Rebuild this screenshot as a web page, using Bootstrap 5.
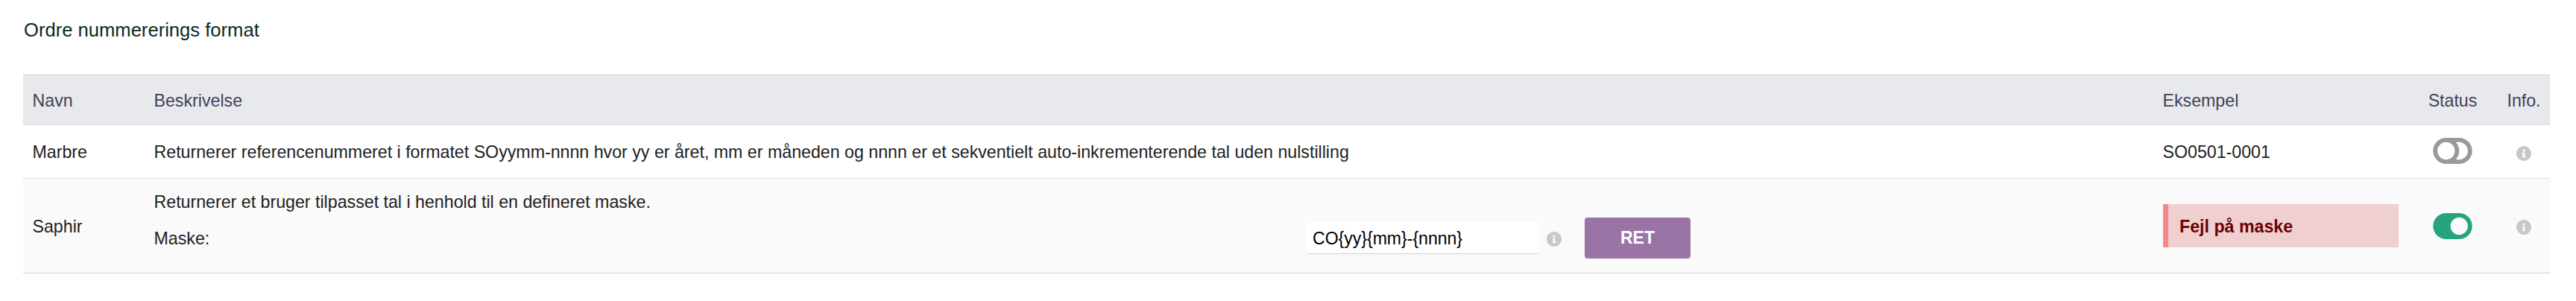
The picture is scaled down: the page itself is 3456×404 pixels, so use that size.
<!DOCTYPE html>
<html lang="da">
<head>
<meta charset="utf-8">
<meta name="viewport" content="width=device-width, initial-scale=1">
<title>Ordre nummererings format</title>
<link href="https://cdn.jsdelivr.net/npm/bootstrap@5.3.0/dist/css/bootstrap.min.css" rel="stylesheet">
<style>
body{font-family:"Liberation Sans",Arial,sans-serif;font-size:23.2px;line-height:34px;color:#212121;background:#fff;overflow:hidden}
.page-wrap{padding:23px 35px 0 31px}
.page-title{font-size:25.6px;line-height:34px;color:#0c2a20;margin:0 0 43px;padding-left:1px;font-weight:400}
.format-table{table-layout:fixed;width:3390px;border-collapse:separate;border-spacing:0;margin:0;--bs-table-color:#212121;--bs-table-bg:transparent}
.format-table>:not(caption)>*>*{padding:0 12px 0 12.5px;border:0;border-bottom:1px solid #dcdcde;vertical-align:middle;background:transparent;box-shadow:none;color:#212121}
.format-table>thead>tr>th{height:68px;padding-top:2px;background:#e8e9ed;border-top:1px solid #d3d3d5;color:#424158;font-weight:400}
.format-table>tbody>tr.row-plain>td{height:72px}
.format-table>tbody>tr.row-mask>td{height:127px;background:#fafafa;border-bottom-color:#d3d3d5}
.format-table>tbody>tr.row-mask>td.cell-name{padding-top:2px}
.format-table>tbody>tr.row-mask>td.cell-desc{padding-bottom:5px}
.col-name{width:163px}.col-example{width:341px}.col-status{width:121px}.col-info{width:70px}
.format-table>:not(caption)>*>.tight{padding-left:0;padding-right:0}
.format-table>tbody>tr.row-plain>td.cell-toggle{padding-bottom:2px}
.mask-row{height:55px}
.mask-label{width:1546.5px}
.mask-input{width:313px;height:43px;padding:2px 7px 0 8px;border:0;border-bottom:1px solid #d0d0d0;border-radius:4px;font-size:23.04px;color:#000;background:#fff}
.mask-info{margin:3px 31px 0 9px}
.btn-edit{width:142px;height:55px;padding:0;border:0;border-radius:4px;background:#9b74a6;color:#fff;font-size:23.04px;font-weight:700}
.mask-error{width:316px;height:58px;margin:0 0 0 .5px;padding:2px 14px 0 15px;border:0;border-left:7px solid #f28a89;border-radius:0;background:#f0cfd0;color:#6b0000;font-weight:700}
.toggle-icon{width:53px;height:35px;display:block;margin:0 auto}
.info-icon{width:20px;height:20px;display:block;fill:#c8c8c8}
</style>
<script src="https://cdn.jsdelivr.net/npm/bootstrap@5.3.0/dist/js/bootstrap.bundle.min.js"></script>
</head>
<body>
<svg class="d-none" aria-hidden="true">
<symbol id="i-info" viewBox="8 8 496 496"><path d="M256 8C119.043 8 8 119.083 8 256c0 136.997 111.043 248 248 248s248-111.003 248-248C504 119.083 392.957 8 256 8zm0 110c23.196 0 42 18.804 42 42s-18.804 42-42 42-42-18.804-42-42 18.804-42 42-42zm56 254c0 6.627-5.373 12-12 12h-88c-6.627 0-12-5.373-12-12v-24c0-6.627 5.373-12 12-12h12v-64h-12c-6.627 0-12-5.373-12-12v-24c0-6.627 5.373-12 12-12h64c6.627 0 12 5.373 12 12v100h12c6.627 0 12 5.373 12 12v24z"/></symbol>
<symbol id="i-off" viewBox="0 64 576 384"><path d="M384 64H192C85.961 64 0 149.961 0 256s85.961 192 192 192h192c106.039 0 192-85.961 192-192S490.039 64 384 64zM64 256c0-70.741 57.249-128 128-128 70.741 0 128 57.249 128 128 0 70.741-57.249 128-128 128-70.741 0-128-57.249-128-128zm320 128h-48.905c65.217-72.858 65.236-183.12 0-256H384c70.741 0 128 57.249 128 128 0 70.74-57.249 128-128 128z"/></symbol>
<symbol id="i-on" viewBox="0 64 576 384"><path d="M384 64H192C86 64 0 150 0 256s86 192 192 192h192c106 0 192-86 192-192S490 64 384 64zm0 320c-70.8 0-128-57.3-128-128 0-70.8 57.3-128 128-128 70.8 0 128 57.3 128 128 0 70.8-57.3 128-128 128z"/></symbol>
</svg>
<main class="page-wrap">
  <h1 class="page-title">Ordre nummererings format</h1>
  <table class="table format-table">
    <colgroup><col class="col-name"><col><col class="col-example"><col class="col-status"><col class="col-info"></colgroup>
    <thead>
      <tr><th>Navn</th><th>Beskrivelse</th><th>Eksempel</th><th class="text-center tight">Status</th><th class="text-center tight">Info.</th></tr>
    </thead>
    <tbody>
      <tr class="row-plain">
        <td>Marbre</td>
        <td>Returnerer referencenummeret i formatet SOyymm-nnnn hvor yy er året, mm er måneden og nnnn er et sekventielt auto-inkrementerende tal uden nulstilling</td>
        <td>SO0501-0001</td>
        <td class="tight cell-toggle"><svg class="toggle-icon" fill="#999"><use href="#i-off"/></svg></td>
        <td class="tight"><svg class="info-icon mx-auto mt-1"><use href="#i-info"/></svg></td>
      </tr>
      <tr class="row-mask">
        <td class="cell-name">Saphir</td>
        <td class="cell-desc">
          <div class="mb-1">Returnerer et bruger tilpasset tal i henhold til en defineret maske.</div>
          <div class="mask-row d-flex align-items-center">
            <label class="mask-label" for="mask">Maske:</label>
            <input class="mask-input" id="mask" type="text" value="CO{yy}{mm}-{nnnn}">
            <svg class="info-icon mask-info"><use href="#i-info"/></svg>
            <button class="btn btn-edit" type="button">RET</button>
          </div>
        </td>
        <td><div class="mask-error alert d-flex align-items-center">Fejl på maske</div></td>
        <td class="tight cell-toggle"><svg class="toggle-icon" fill="#26a480"><use href="#i-on"/></svg></td>
        <td class="tight"><svg class="info-icon mx-auto mt-1"><use href="#i-info"/></svg></td>
      </tr>
    </tbody>
  </table>
</main>
</body>
</html>
